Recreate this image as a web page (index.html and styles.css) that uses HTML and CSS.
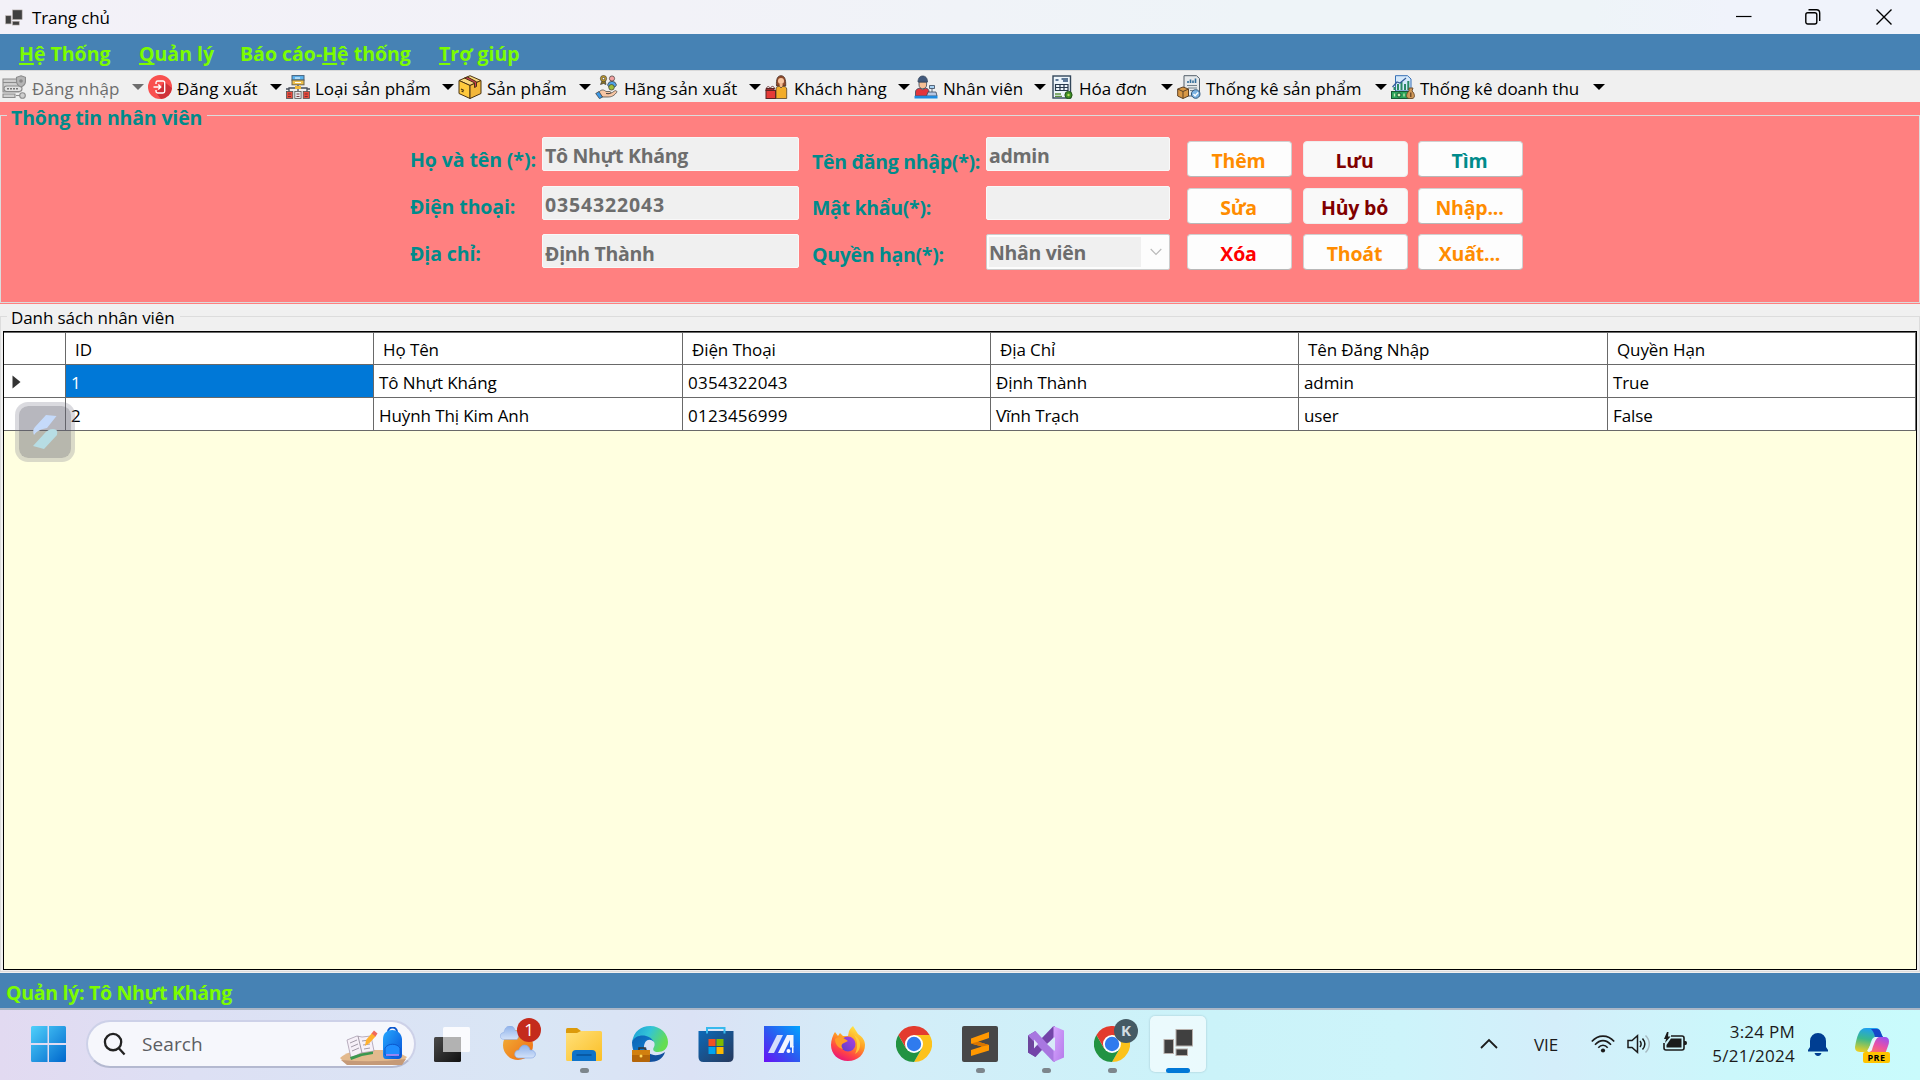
FILE: index.html
```html
<!DOCTYPE html>
<html lang="vi">
<head>
<meta charset="utf-8">
<title>Trang chủ</title>
<link rel="stylesheet" href="styles.css">
</head>
<body>
<svg class="defs" width="0" height="0" aria-hidden="true">
  <defs>
    <linearGradient id="gWin" x1="0" y1="0" x2="1" y2="1"><stop offset="0" stop-color="#4fd0fb"/><stop offset="1" stop-color="#0067cc"/></linearGradient>
    <linearGradient id="gDark" x1="0" y1="0" x2="1" y2="1"><stop offset="0" stop-color="#4a4a4a"/><stop offset="1" stop-color="#111"/></linearGradient>
    <linearGradient id="gSun" x1="0" y1="0" x2="1" y2="1"><stop offset="0" stop-color="#f0b43c"/><stop offset="1" stop-color="#f0690f"/></linearGradient>
    <linearGradient id="gCloud" x1="0" y1="0" x2="0" y2="1"><stop offset="0" stop-color="#8fb2ea"/><stop offset="1" stop-color="#d3e2f9"/></linearGradient>
    <linearGradient id="gFold" x1="0" y1="0" x2="1" y2="1"><stop offset="0" stop-color="#ffe07a"/><stop offset="1" stop-color="#fbbf26"/></linearGradient>
    <linearGradient id="gEdge" x1="0" y1="0" x2="1" y2="0.4"><stop offset="0" stop-color="#1b9bd8"/><stop offset="0.5" stop-color="#33c4d6"/><stop offset="1" stop-color="#65dd52"/></linearGradient>
    <linearGradient id="gEdge2" x1="0" y1="0" x2="1" y2="1"><stop offset="0" stop-color="#0c62b4"/><stop offset="1" stop-color="#1490df"/></linearGradient>
    <linearGradient id="gStore" x1="0" y1="0" x2="1" y2="1"><stop offset="0" stop-color="#0d69b8"/><stop offset="1" stop-color="#27395c"/></linearGradient>
    <linearGradient id="gM" x1="1" y1="0" x2="0" y2="1"><stop offset="0" stop-color="#00a5ff"/><stop offset="0.5" stop-color="#2b5bf0"/><stop offset="1" stop-color="#6a10f5"/></linearGradient>
    <linearGradient id="gFox" x1="0.8" y1="0" x2="0.3" y2="1"><stop offset="0" stop-color="#fff14a"/><stop offset="0.45" stop-color="#ff9a22"/><stop offset="0.75" stop-color="#ff4545"/><stop offset="1" stop-color="#e8137c"/></linearGradient>
    <linearGradient id="gFoxIn" x1="0" y1="1" x2="1" y2="0"><stop offset="0" stop-color="#5a3fc8"/><stop offset="1" stop-color="#b040e0"/></linearGradient>
    <linearGradient id="gVs" x1="0" y1="0" x2="1" y2="1"><stop offset="0" stop-color="#d7a6ff"/><stop offset="1" stop-color="#b57bea"/></linearGradient>
    <linearGradient id="gBag" x1="0" y1="0" x2="1" y2="1"><stop offset="0" stop-color="#25a8ff"/><stop offset="1" stop-color="#0752d8"/></linearGradient>
    <linearGradient id="gCopA" x1="0.4" y1="0" x2="0.2" y2="1"><stop offset="0" stop-color="#1fa0f0"/><stop offset="0.45" stop-color="#3bb98c"/><stop offset="1" stop-color="#f0d020"/></linearGradient>
    <linearGradient id="gCopB" x1="0.8" y1="0" x2="0.3" y2="1"><stop offset="0" stop-color="#9a50f0"/><stop offset="0.5" stop-color="#e850a8"/><stop offset="1" stop-color="#ff7a58"/></linearGradient>
    <symbol id="chrome" viewBox="0 0 36 36">
      <path d="M18 9H33.600A18 18 0 0 1 18 36L25.800 22.500z" fill="#fcc21b"/>
      <path d="M10.200 22.500 2.400 9A18 18 0 0 0 18 36L25.800 22.500z" fill="#229342"/>
      <path d="M18 9H33.600A18 18 0 0 0 2.400 9L10.200 22.500z" fill="#e33b2e"/>
      <circle cx="18" cy="18" r="9" fill="#fff"/><circle cx="18" cy="18" r="7.200" fill="#2f7bee"/>
    </symbol>
    <symbol id="forms" viewBox="0 0 36 36">
      <g fill="#404040" stroke="#b8b0ac" stroke-width="1"><rect x="16" y="3.500" width="16.500" height="16.500"/><rect x="4" y="13.500" width="9.500" height="14"/><rect x="16" y="23" width="11.500" height="6.500"/></g>
    </symbol>
  </defs>
</svg>

<header class="titlebar">
  <svg class="app-icon" viewBox="3 2 31 29"><use href="#forms" width="36" height="36"/></svg>
  <span class="app-title">Trang chủ</span>
  <div class="win-buttons">
    <svg width="16" height="16" viewBox="0 0 16 16"><path d="M0 7.500H15.500" stroke="#000" stroke-width="1.200"/></svg>
    <svg width="16" height="16" viewBox="0 0 16 16" fill="none" stroke="#000" stroke-width="1.400"><rect x=".8" y="3.700" width="11" height="11.300" rx="2"/><path d="M3.500.8H11.500a3.200 3.200 0 0 1 3.200 3.200V12"/></svg>
    <svg width="16" height="16" viewBox="0 0 16 16" stroke="#000" stroke-width="1.400"><path d="M.5.5 15.500 15.500M15.500.5.5 15.500"/></svg>
  </div>
</header>

<nav class="menubar">
  <span><u>H</u>ệ Thống</span><span><u>Q</u>uản lý</span><span>Báo cáo-<u>H</u>ệ thống</span><span><u>T</u>rợ giúp</span>
</nav>

<div class="toolbar">
  <div class="tool disabled">
    <svg viewBox="0 0 24 24"><g fill="#cfcfcf" stroke="#8c8c8c" stroke-width="1.100"><path d="M1 4H17V17H1z"/><path d="M1 7.500H17"/><rect x="2" y="11" width="18" height="5.500" rx="2.700" fill="#e2e2e2"/><path d="M19 .8l4.500 1.500V6c0 3-2 5-4.500 6-2.500-1-4.500-3-4.500-6V2.300z" fill="#b5b5b5"/><path d="M1 19H13v3.500H1z"/><circle cx="20.500" cy="20.500" r="2.800"/><path d="M14 20.500H18"/></g><path d="M5 13.800H17" stroke="#777" stroke-width="1.600" stroke-dasharray="2 1"/><circle cx="19" cy="6" r="1.800" fill="#888"/></svg>
    <span>Đăng nhập</span><i></i></div>
  <div class="tool">
    <svg viewBox="0 0 24 24"><circle cx="12" cy="12" r="12" fill="#f9504f"/><path d="M16.500 7 24 13A12 12 0 0 1 13 24L8 18z" fill="#cf3138"/><path d="M8 9V7.500A1.700 1.700 0 0 1 9.700 6H15a1.700 1.700 0 0 1 1.700 1.700V16.300A1.700 1.700 0 0 1 15 18H9.700A1.700 1.700 0 0 1 8 16.300V15M5.500 12H12.500M10.300 9.500 12.800 12 10.300 14.500" fill="none" stroke="#fff" stroke-width="1.400"/></svg>
    <span>Đăng xuất</span><i></i></div>
  <div class="tool">
    <svg viewBox="0 0 24 24"><path d="M12 10V16M3 17V13H21V17M0 14H3M21 14H24" fill="none" stroke="#454c58" stroke-width="1.300"/><rect x="6" y=".6" width="12" height="4.500" fill="#5bb3ef" stroke="#44617c"/><rect x="6" y="5.100" width="12" height="4.700" fill="#efc14c" stroke="#6b624b"/><path d="M9 3h5M9 7.500h6" stroke="#fff" stroke-width="1.200"/><rect x="9" y="11" width="6" height="3" fill="#f0b93a"/><g stroke="#535353" stroke-width=".8"><rect x=".5" y="16.500" width="6.300" height="7" fill="#e84b3c"/><rect x="8.800" y="16.500" width="6.300" height="7" fill="#e8e8ea"/><rect x="17.200" y="16.500" width="6.300" height="7" fill="#e84b3c"/></g><path d="M2 19h3M2 21.500h3M10.500 19h3M10.500 21.500h3M18.700 19h3M18.700 21.500h3" stroke="#6e2d31" stroke-width=".9"/></svg>
    <span>Loại sản phẩm</span><i></i></div>
  <div class="tool">
    <svg viewBox="0 0 24 24"><g stroke="#4a3412" stroke-width="1"><path d="M12 .7 23 5.500 12 10.500 1 5.500z" fill="#fad87e"/><path d="M1 5.500 12 10.500V23.500L1 18.500z" fill="#ffc93c"/><path d="M23 5.500 12 10.500V23.500L23 18.500z" fill="#f3b73a"/><path d="M6.500 3 16.500 7.800V12.500L18.500 11.500V6.800L9.500 2z" fill="#cd3d53"/></g><path d="M3 14l3 1.500M3.500 16l2 1" stroke="#4a3412" stroke-width="1.200"/></svg>
    <span>Sản phẩm</span><i></i></div>
  <div class="tool">
    <svg viewBox="0 0 24 24"><g stroke="#3d3a35" stroke-width=".7"><path d="M7 6 5.500 9.500 8.500 8.500 11 9.500 10 5z" fill="#8d7523"/><circle cx="8.500" cy="3.600" r="3.100" fill="#c9a22c"/><circle cx="8.500" cy="3.600" r="1.200" fill="#fff"/><circle cx="17" cy="3.500" r="2.600" fill="#f3a2a2"/><path d="M12.500 10a4.600 4.600 0 0 1 9 0l-1.500 2h-6z" fill="#4ea3e8"/><circle cx="16.500" cy="12.300" r="2.800" fill="#9fbf38"/><path d="M3.500 17.500C7 13.500 9 15 11 16.500H15c1.500.5.800 2-.5 2H11c3 1 6-.5 8.500-2.500 1.500-1 3 .3 2 1.600C18 22 15 22 12 22H7z" fill="#f8c6a4"/><path d="M.7 18.500 4 16.500 7.500 22 4.500 23.700z" fill="#3c98e5"/></g></svg>
    <span>Hãng sản xuất</span><i></i></div>
  <div class="tool">
    <svg viewBox="0 0 24 24"><path d="M11.500 11C11 4 12.500.7 16 .7S21 4 20.700 11z" fill="#8f4a2b" stroke="#4a2c20" stroke-width=".8"/><circle cx="16" cy="6" r="3" fill="#f9c7a1"/><path d="M14.600 9h3v3.500h-3z" fill="#f5b98d"/><path d="M11 23.500V14c0-2 1.500-2.700 3.500-2.700L16 13l1.700-1.700c2 0 4 .8 4 2.700v9.500z" fill="#f2ac29" stroke="#54412a" stroke-width=".8"/><path d="M1.500 14v-.5c0-2.500 3.500-2.500 3.500 0M5.500 14c0-3.500 4-3.500 4 0" fill="none" stroke="#6d3a3a"/><path d="M1 13.500H9V16H1z" fill="#a02d2e" stroke="#5b2424"/><rect x="1" y="15.500" width="9.500" height="8" fill="#e53a37" stroke="#5b2424"/></svg>
    <span>Khách hàng</span><i></i></div>
  <div class="tool">
    <svg viewBox="0 0 24 24"><g stroke="#38465b" stroke-width=".8"><path d="M5 7H12.600V10C12.600 15 5 15 5 10z" fill="#f6bf95"/><path d="M4 7C4 3 6 1 8.700 1S13.500 3 13.500 7z" fill="#41597c"/><path d="M1.500 21V17c0-2.500 2-3.500 4.500-3.800l2.700 1.500 2.700-1.500c2.500.3 3.600 1.300 3.600 3.800v4z" fill="#e3353b"/><path d="M15.500 10.500h5v3h-5zM18 13.500v4" fill="#a9d3f5"/><path d="M12.500 21 14 17H22L23 21z" fill="#b7c8e4"/></g><rect x=".5" y="20.800" width="23" height="2.700" fill="#1f8bdf"/></svg>
    <span>Nhân viên</span><i></i></div>
  <div class="tool">
    <svg viewBox="0 0 24 24"><rect x="3" y="1" width="17.500" height="22" fill="#edf5fb" stroke="#33475b" stroke-width="1.400"/><path d="M5.500 5h3M11.500 4h6.500M13 6h5" stroke="#2c4d75" stroke-width="1.400"/><path d="M5.500 9.500H18V15.500H5.500zM5.500 12.500H18M10 9.500v6M14 9.500v6" fill="none" stroke="#27384b" stroke-width="1.200"/><path d="M5 19h6M5 21.300h7" stroke="#5c9140" stroke-width="1.300"/><circle cx="18.500" cy="20" r="3.600" fill="#3f8f27" stroke="#215215"/><circle cx="18.500" cy="20" r="1.200" fill="#b4dd57"/></svg>
    <span>Hóa đơn</span><i></i></div>
  <div class="tool">
    <svg viewBox="0 0 24 24"><path d="M7 .7H19.500L22.500 3.500V21H7z" fill="#e6e9eb" stroke="#55606b" stroke-width="1"/><path d="M11 8V6M13.500 8V4.500M16 8V5.500M18.500 8V3.500" stroke="#356f9b" stroke-width="1.600"/><path d="M10 10.500H20M11 13H20M13 15.500H19" stroke="#75838d" stroke-width="1"/><path d="M6 12 11.500 14V21L6 23.500.7 21V14z" fill="#d89846" stroke="#5e4225"/><path d="M.7 14 6 16.500 11.500 14M6 16.500v7" fill="none" stroke="#5e4225"/><circle cx="18.700" cy="19" r="4.300" fill="#7db4e3" stroke="#34597c"/><path d="M16.500 19l1.600 1.700 3-3.200" fill="none" stroke="#fff" stroke-width="1.300"/></svg>
    <span>Thống kê sản phẩm</span><i></i></div>
  <div class="tool">
    <svg viewBox="0 0 24 24"><path d="M4.500.7H16.500L20 4V16H4.500z" fill="#d5e9fb" stroke="#356fb6" stroke-width="1"/><path d="M3.500 15V12M7 15V9M10.500 15V7M14 15V9M17.300 15V6" stroke="#2b8a65" stroke-width="2"/><path d="M1.500 12 6 7 9 8 15 3" fill="none" stroke="#345d98" stroke-width="1.200"/><rect x=".5" y="16.500" width="17" height="7" fill="#2ba45b" stroke="#165a33"/><circle cx="8" cy="20" r="2" fill="#d3f1b9" stroke="#165a33"/><path d="M3.500 18.500v3M13 18.500v3" stroke="#c5edb0" stroke-width="1.300"/><path d="M18 13h4l-1 3c3 2.500 3.500 7.500 0 7.500h-3c-3.500 0-3-5 0-7.500z" fill="#d19a5a" stroke="#6b4827" stroke-width=".9"/><path d="M19.800 17.500v4.500" stroke="#5c3b1f" stroke-width="1.200"/></svg>
    <span>Thống kê doanh thu</span><i></i></div>
</div>

<main>
  <section class="editor">
    <fieldset>
      <legend>Thông tin nhân viên</legend>
      <div class="form">
        <div class="labels first"><label>Họ và tên (*):</label><label>Điện thoại:</label><label>Địa chỉ:</label></div>
        <div class="fields wide"><div class="field">Tô Nhựt Kháng</div><div class="field phone">0354322043</div><div class="field last">Định Thành</div></div>
        <div class="labels second"><label>Tên đăng nhập(*):</label><label>Mật khẩu(*):</label><label>Quyền hạn(*):</label></div>
        <div class="fields"><div class="field">admin</div><div class="field"></div>
          <div class="combo"><span>Nhân viên</span><svg width="12" height="8" viewBox="0 0 12 8"><path d="M.7 1 6 6.500 11.300 1" fill="none" stroke="#b9b9b9" stroke-width="1.100"/></svg></div></div>
        <div class="buttons">
          <button class="orange">Thêm</button><button class="maroon off">Lưu</button><button class="teal">Tìm</button>
          <button class="orange">Sửa</button><button class="maroon off">Hủy bỏ</button><button class="orange">Nhập...</button>
          <button class="red">Xóa</button><button class="orange">Thoát</button><button class="orange">Xuất...</button>
        </div>
      </div>
    </fieldset>
  </section>

  <fieldset class="list">
    <legend>Danh sách nhân viên</legend>
    <div class="datagrid">
      <div class="rows">
        <div class="cell"></div><div class="cell head">ID</div><div class="cell head">Họ Tên</div><div class="cell head">Điện Thoại</div><div class="cell head">Địa Chỉ</div><div class="cell head">Tên Đăng Nhập</div><div class="cell head">Quyền Hạn</div>
        <div class="cell marker"><svg width="9" height="14" viewBox="0 0 9 14"><path d="M.5.500 8.500 7 .5 13.500z" fill="#333"/></svg></div><div class="cell selected">1</div><div class="cell">Tô Nhựt Kháng</div><div class="cell digits">0354322043</div><div class="cell">Định Thành</div><div class="cell">admin</div><div class="cell">True</div>
        <div class="cell"></div><div class="cell">2</div><div class="cell">Huỳnh Thị Kim Anh</div><div class="cell digits">0123456999</div><div class="cell">Vĩnh Trạch</div><div class="cell">user</div><div class="cell">False</div>
      </div>
    </div>
  </fieldset>
</main>

<div class="float-button">
  <svg width="26" height="36" viewBox="0 0 26 36"><path d="M14 1 24.500 2 15 14C9 15 5 17 2 21Q0 16 3 13z" fill="#c5dafa"/><path d="M25 21 12 35 1 32 12 20C16 15 21 14 24.500 16Q26 18 25 21z" fill="#b7dde4"/></svg>
</div>

<footer class="status">Quản lý: Tô Nhựt Kháng</footer>

<div class="taskbar">
  <svg class="start" viewBox="0 0 35 36"><path d="M1.500 0H16.500V17H0V1.500A1.500 1.500 0 0 1 1.500 0zM18 0H33.500A1.500 1.500 0 0 1 35 1.500V17H18zM0 19H16.500V36H1.500A1.500 1.500 0 0 1 0 34.500zM18 19H35V34.500A1.500 1.500 0 0 1 33.500 36H18z" fill="url(#gWin)"/></svg>
  <div class="search">
    <svg class="lens" viewBox="0 0 24 24" fill="none" stroke="#222" stroke-width="2.400"><circle cx="10.500" cy="10" r="8.500"/><path d="M16.500 16.500 22.500 23"/></svg>
    <span>Search</span>
    <svg class="promo" viewBox="0 0 68 38"><path d="M0 31C5 26 14 23 26 23H54L67 30 63 35Q32 37 4 35z" fill="#e3ba8e"/><path d="M1 33Q32 36 66 32L62 38H7z" fill="#c59a78"/><path d="M7 13 17 9 22 10 31 9 34 24 21 26 11 31z" fill="#f6f0f8" stroke="#a89cae" stroke-width=".8"/><path d="M18 9 22 26M10 16 17 13M11 20 18 17M12 24 19 21M22 14 29 13M23 18 30 17M24 22 30 21" stroke="#a39ba8" fill="none"/><path d="M10 30 21 26.500 33 24.500 33 27 22 29 11 33z" fill="#3c9850"/><path d="M25 19 26 13 32 6 36 9 29.500 16z" fill="#ffb12e"/><path d="M31.500 6.500 34 3.500 37.500 6.500 35.500 9.500z" fill="#f0695a"/><path d="M48 5C48-1 57-1 57 5" fill="none" stroke="#0b57cd" stroke-width="2"/><path d="M43 12C43 0 61 0 62 12V28Q62 32 58 32H46Q43 32 43 28z" fill="url(#gBag)"/><path d="M45 21C48 16 57 16 60 21V28Q52 31 45 28z" fill="#1f8dff" stroke="#074bc0" stroke-width=".8"/><path d="M46 28H59" stroke="#b886f3" stroke-width="1.600"/></svg>
  </div>
  <div class="apps">
    <div class="app"><svg viewBox="0 0 36 36"><rect y="11" width="27" height="25" rx="1.500" fill="url(#gDark)"/><rect x="9" y="1" width="27" height="25" rx="1.500" fill="#fff" opacity=".85"/><rect x="9" y="11" width="18" height="15" fill="#b2b2b2"/></svg></div>
    <div class="app"><svg viewBox="0 0 36 36"><circle cx="18" cy="19" r="15" fill="url(#gSun)"/><path d="M4 13.500C-1 13.500-1 6.500 4 6.500 5-2 14-2 15 4.500c4 0 5 6 2 9z" fill="url(#gCloud)" stroke="#88a9e4" stroke-width=".5"/><path d="M18 32c-5-1-4-8 1-8 2-7 10-6 11 0 7 0 7 8 1 8z" fill="url(#gCloud)" stroke="#88a9e4" stroke-width=".7"/></svg><b class="badge red-badge">1</b></div>
    <div class="app running"><svg viewBox="0 0 36 36"><path d="M0 3.500Q0 2 1.500 2H11L15 5V9H0z" fill="#dc9a0a"/><path d="M0 7H11L15 5H34.500Q36 5 36 6.500V33.500Q36 35 34.500 35H1.500Q0 35 0 33.500z" fill="url(#gFold)"/><path d="M6 35V28Q6 24 10 24H26Q30 24 30 28V35z" fill="#0f73c9"/><path d="M11 29H25" stroke="#075298" stroke-width="1.600" stroke-linecap="round"/></svg></div>
    <div class="app"><svg viewBox="0 0 36 36"><path d="M0 16C2 5 9 0 18 0 29 0 36 8 36 16 36 23 31 26 26 26 22 26 20 24 22 21 24 17 21 13 17 13 9 10 3 11 0 16z" fill="url(#gEdge)"/><path d="M0 16C4 7 18 8 22 16 17 11 12 15 12 21 12 29 20 34 30 29 26 37 10 38 4 29 1 25 0 21 0 16z" fill="url(#gEdge2)"/><path d="M14 21C15 29 24 32 33 26 31 33 25 36 17 36 12 33 11 26 14 21z" fill="#124f9d"/><path d="M7 24V22H13V24" fill="none" stroke="#333" stroke-width="1.500"/><rect y="24" width="18" height="12" rx="1" fill="#b56609"/><path d="M0 24H18V29H0z" fill="#d2800f"/><circle cx="9" cy="30" r="1.500" fill="#ffd65a"/></svg></div>
    <div class="app"><svg viewBox="0 0 36 36"><path d="M.5 5H35.500V31Q35.500 36 30.500 36H5.500Q.5 36 .5 31z" fill="url(#gStore)"/><path d="M9 7.500V2H26.500V7.500" fill="none" stroke="#37b9ed" stroke-width="2"/><path d="M10.500 13h7v7h-7z" fill="#f25022"/><path d="M18.500 13h7v7h-7z" fill="#7fba00"/><path d="M10.500 21h7v7h-7z" fill="#00a4ef"/><path d="M18.500 21h7v7h-7z" fill="#ffb900"/></svg></div>
    <div class="app"><svg viewBox="0 0 36 36"><rect width="36" height="36" fill="url(#gM)"/><path d="M4 27 13 9H19L10 27z" fill="#d5defc"/><path d="M14 27 23 9H29.500V21.500H26V14L19.500 27z" fill="#f2f5ff"/><circle cx="24.500" cy="25" r="2" fill="#fff"/><path d="M28 20H29.500V27H28z" fill="#f2f5ff"/></svg></div>
    <div class="app"><svg viewBox="0 0 36 36"><path d="M21 2 23 0 28 8C33 11 35 15 35 19 35 28 28 35 18 35 8 35 1 28 1 19 1 14 3 9 5 6L8 10 10 7 13 10 18 10 19 5z" fill="url(#gFox)"/><circle cx="18" cy="18" r="7.500" fill="url(#gFoxIn)"/><path d="M5 13C9 10 13 11 18 15L14 17C11 18 11 21 13 23 8 22 5 18 5 13z" fill="#ff9d26"/><path d="M24 9C32 13 32 24 25 28 28 22 28 15 24 9z" fill="#ffd53c" opacity=".8"/></svg></div>
    <div class="app"><svg viewBox="0 0 36 36"><use href="#chrome" width="36" height="36"/></svg></div>
    <div class="app running"><svg viewBox="0 0 36 36"><rect width="36" height="36" rx="2" fill="#474747"/><path d="M9 12.500 27 6V12L16 15.800 27 19V24.500L9 30V24L20 20.500 9 17.500z" fill="#ff9800"/><path d="M16 15.800 27 19 20 20.500 9 17.500z" fill="#d87500"/></svg></div>
    <div class="app running"><svg viewBox="0 0 36 36"><path d="M0 9.500 7.500 5V31L0 26.500z" fill="#6d469c"/><path d="M0 26.500 7.500 31 27 10V0L25 .5z" fill="#7344a8"/><path d="M0 9.500 7.500 5 27 26V36L25 35.500z" fill="#a877e0"/><path d="M25.500 0 36 4.500V31.500L25.500 36z" fill="url(#gVs)"/><path d="M6 13.500V22.500L10 18z" fill="#e2eefa"/><path d="M27 11V25L19 18z" fill="#d7eaf8"/></svg></div>
    <div class="app running"><svg viewBox="0 0 36 36"><use href="#chrome" width="36" height="36"/></svg><b class="badge user-badge">K</b></div>
    <div class="app active"><svg viewBox="0 0 36 36"><use href="#forms" width="36" height="36"/></svg></div>
  </div>
  <div class="tray">
    <svg class="up" width="18" height="11" viewBox="0 0 18 11"><path d="M1 10 9 2 17 10" fill="none" stroke="#1b1b1b" stroke-width="1.800"/></svg>
    <span class="lang">VIE</span>
    <svg class="wifi" width="24" height="18" viewBox="0 0 24 18" fill="none" stroke="#1b1b1b" stroke-width="1.600"><path d="M.8 6.500C7-.7 17-.7 23.200 6.500M4 9.700C9 4.300 15 4.300 20 9.700M7.300 12.700C10 9.500 14 9.500 16.700 12.700"/><circle cx="12" cy="15.500" r="2.100" fill="#1b1b1b" stroke="none"/></svg>
    <svg class="sound" width="24" height="20" viewBox="0 0 24 20" fill="none" stroke="#1b1b1b" stroke-width="1.500"><path d="M1 6.500H5L10.500 1.700V18.300L5 13.500H1z"/><path d="M13 7c1.500 2 1.500 4 0 6M15.500 4.500c3 3.500 3 7.500 0 11"/><path d="M18.500 1.500c5 5 5 12 0 17" stroke="#a7bac2"/></svg>
    <svg class="battery" width="24" height="20" viewBox="0 0 24 20"><path d="M8 4H19a2 2 0 0 1 2 2V16a2 2 0 0 1-2 2H3a2 2 0 0 1-2-2V11" fill="none" stroke="#1b1b1b" stroke-width="1.600"/><path d="M8 6.500H18.500V15.500H3.500V13z" fill="#1b1b1b"/><path d="M21 9h1.500q1.500 0 1.500 2t-1.500 2H21zM5.500 0H4L1 7H3L2 11 7.500 4.500H5z" fill="#1b1b1b"/></svg>
    <div class="clock"><span>3:24 PM</span><span>5/21/2024</span></div>
    <svg class="bell" width="20" height="23" viewBox="0 0 20 23"><path d="M10 0a8 8 0 0 1 8 8V14L20 17V18.500H0V17L2 14V8A8 8 0 0 1 10 0zM6.500 20H13.500Q12.500 23 10 23T6.500 20z" fill="#003e92"/></svg>
    <div class="copilot"><svg width="34" height="30" viewBox="0 0 34 30"><path d="M0 19C2 8 4 0 11 0H21C26 0 25 6 28 9H21C16 9 16 15 13 24H7C2 24 0 23 0 19z" fill="url(#gCopA)"/><path d="M16 1H22C26 1 26 6 28 9H20C19 5 18 3 16 1z" fill="#1646c8"/><path d="M21 9H30C34 9 35 13 33 18L30 26H12C16 26 17 12 21 9z" fill="url(#gCopB)"/><path d="M20 9H24C21 9 18 18 17 22 16 24 14 24 12 23z" fill="#e9f4fb"/></svg><b>PRE</b></div>
  </div>
</div>
</body>
</html>
```

FILE: styles.css
```css
* { box-sizing: border-box; }
body {
  margin: 0; width: 1920px; height: 1080px; overflow: hidden;
  display: flex; flex-direction: column; position: relative;
  background: #f0f0f0; color: #000;
  font: 17px "Open Sans", "Noto Sans", sans-serif; letter-spacing: -0.1px;
}
.defs { position: absolute; }
fieldset { margin: 0; padding: 0; border: 1px solid #dcdcdc; min-width: 0; }

/* Title bar */
.titlebar { height: 34px; display: flex; align-items: center; padding: 0 28px 0 5px; background: linear-gradient(90deg, #f3f1f8 0, #f2f2f8 35%, #eef4f8 65%, #eef4f8 83%, #f0f3fb 90%); }
.app-icon { width: 18px; height: 17px; margin-right: 9px; }
.app-title { line-height: 34px; padding-top: 1px; }
.win-buttons { margin-left: auto; display: flex; gap: 55px; }
.win-buttons svg:first-child { margin-right: -2px; }

/* Menus */
.menubar { height: 36px; background: #4682b4; color: #7cfc00; display: grid; grid-template-columns: 120px 101px 199px auto; padding: 1px 0 0 19px; font-weight: 700; font-size: 19.500px; letter-spacing: 0; line-height: 38px; }
.menubar u { text-underline-offset: 2px; text-decoration-thickness: 2px; text-decoration-skip-ink: none; }
.toolbar { height: 32px; border-top: 1px solid #d9d9d9; padding-left: 2px; display: grid; grid-template-columns: 146px 138px 172px 137px 170px 149px 136px 127px 214px 218px; line-height: 35px; letter-spacing: 0; }
.tool { display: flex; height: 31px; white-space: nowrap; }
.tool svg { width: 24px; height: 24px; margin: 4px 5px 0 0; flex: none; }
.tool i { border: 6px solid transparent; border-top-color: #000; border-bottom: 0; height: 6px; margin: 13px 4px 0 auto; }
.disabled { color: #6d6d6d; letter-spacing: .1px; }
.disabled svg { margin-right: 6px; }
.disabled i { border-top-color: #6d6d6d; }

main { flex: 1; display: flex; flex-direction: column; }

/* Employee form */
.editor { height: 202px; background: #ff8080; font-weight: 700; font-size: 19.500px; letter-spacing: -0.3px; }
.editor fieldset { height: 201px; color: #008b8b; }
.editor legend { margin-left: 6px; padding: 5px 5px 0 4px; height: 27px; line-height: 21px; letter-spacing: -0.15px; }
.form { display: flex; padding-left: 409px; white-space: nowrap; }
.labels { display: flex; flex-direction: column; gap: 12.500px; line-height: 34px; }
.first { width: 132px; margin-top: 14px; letter-spacing: -0.1px; }
.first label:last-child { padding-top: 1px; }
.second { width: 174px; margin: 16px 0 0 13px; }
.second label:nth-child(2) { margin: -1px 0 1px; }
.fields { display: grid; grid-template-rows: 49px 48px 36px; align-items: start; width: 184px; margin-top: 8px; color: #6d6d6d; }
.wide { width: 257px; }
.field { height: 34px; background: #f0f0f0; border: 1px solid #f8f8f8; border-radius: 2px; line-height: 33px; padding: 1px 2px 0; }
.phone { letter-spacing: .85px; }
.last { padding-top: 2px; }
.combo { height: 36px; background: #fdfdfd; border: 1px solid #cccccc; border-radius: 2px; padding: 2px; display: flex; align-items: center; }
.combo span { width: 152px; height: 30px; line-height: 32px; background: #f0f0f0; }
.combo svg { margin-left: 9px; }
.buttons { display: grid; grid-template-columns: 116px 115px 105px; grid-template-rows: 47px 46px 36px; margin: 12px 0 0 17px; }
.buttons button { font: inherit; letter-spacing: -0.2px; width: 105px; height: 36px; padding: 2px 2px 0 0; background: #fdfdfd; border: 1px solid #d0d0d0; border-bottom-color: #b8b8b8; border-radius: 4px; line-height: 34px; }
.buttons .off { background: #f9f9f9; border-color: #eee; }
.orange { color: #ff8c00; }
.maroon { color: #800000; }
.teal { color: #008b8b; }
.red { color: #f00; }

/* Employee list */
.list { height: 668px; }
.list legend { margin-left: 6px; padding: 1px 5px 0 4px; height: 25px; line-height: 26px; }
.datagrid { margin: 2px 2px 0; height: 639px; border: 1px solid #000; background: #ffffe0; }
.rows { display: grid; grid-template-columns: 62px 308px 309px 308px 308px 309px 308px; grid-template-rows: 32px 33px 33px; border-top: 1px solid #696969; white-space: nowrap; }
.cell { background: #fff; border: solid #696969; border-width: 0 1px 1px 0; padding: 2px 0 0 5px; line-height: 32px; }
.head { padding-left: 9px; padding-top: 1px; line-height: 31px; }
.digits { letter-spacing: .25px; }
.selected { background: #0078d7; color: #fff; }
.marker { padding: 10px 0 0 8px; line-height: 0; }

.float-button { position: absolute; left: 15px; top: 402px; width: 60px; height: 60px; border: 4px solid rgba(120, 120, 135, .27); border-radius: 13px; background: rgba(95, 95, 110, .45); background-clip: padding-box; display: flex; align-items: center; justify-content: center; }

.status { height: 35px; background: #4682b4; color: #7cfc00; font-weight: 700; font-size: 19.500px; letter-spacing: -0.3px; line-height: 38px; padding: 1px 0 0 6px; }

/* Taskbar */
.taskbar { height: 72px; border-top: 2px solid #abb6c6; display: flex; align-items: flex-start; background: linear-gradient(90deg, #e2daf1 0, #dde0f4 10%, #d9e6f5 28%, #dbe2f5 36%, #d3edf8 46%, #cbf3f9 63%, #cdf4fa 73%, #d4eefa 81%, #cbf7fb 90%, #c9fbfc 100%); }
.start { width: 35px; height: 36px; margin: 16px 20px 0 31px; }
.search { width: 330px; height: 48px; margin-top: 10px; border: 2px solid #cdd1e8; border-bottom-color: #b4b9d0; border-radius: 24px; background: #f6f7fc; display: flex; padding: 0 6px 0 15px; }
.lens { width: 23px; height: 24px; margin-top: 10px; }
.search span { font-size: 19px; line-height: 44px; color: #5c5d62; margin-left: 16px; letter-spacing: .1px; }
.promo { width: 68px; height: 38px; margin: 5px 0 0 auto; }
.apps { display: flex; gap: 30px; margin: 16px 0 0 18px; }
.app { width: 36px; height: 56px; position: relative; }
.app > svg { width: 36px; height: 36px; display: block; }
.running::after, .active::after { content: ""; display: block; width: 9px; height: 5px; border-radius: 3px; background: #7d868c; margin: 6px auto 0; }
.active { width: 56px; padding: 10px 10px 0; margin: -10px; background: rgba(255, 255, 255, .6); border-radius: 5px; box-shadow: 0 0 2px rgba(90, 120, 140, .45); }
.active::after { width: 24px; background: #0078d7; }
.badge { position: absolute; width: 24px; height: 24px; border-radius: 12px; color: #fff; text-align: center; line-height: 23px; }
.red-badge { left: 17px; top: -8px; background: #c42b1c; font-weight: 400; }
.user-badge { left: 20px; top: -7px; background: #455a64; color: #d3dde2; font-size: 15px; }
.tray { display: flex; margin-left: auto; color: #1b1b1b; padding-right: 30px; }
.up { margin: 28px 35px 0 0; }
.lang { line-height: 70px; width: 58px; padding-left: 1px; }
.wifi { margin: 25px 12px 0 0; }
.sound { margin: 24px 12px 0 0; }
.battery { margin: 22px 0 0; }
.clock { display: flex; flex-direction: column; width: 108px; text-align: right; line-height: 24px; padding-top: 10px; letter-spacing: .25px; }
.bell { margin: 23px 27px 0 13px; }
.copilot { width: 35px; height: 36px; margin-top: 18px; position: relative; }
.copilot b { position: absolute; right: 0; bottom: 1px; width: 27px; height: 11px; border-radius: 2px; background: #ffc400; font-size: 9px; line-height: 11px; letter-spacing: .5px; text-align: center; color: #000; }
```
